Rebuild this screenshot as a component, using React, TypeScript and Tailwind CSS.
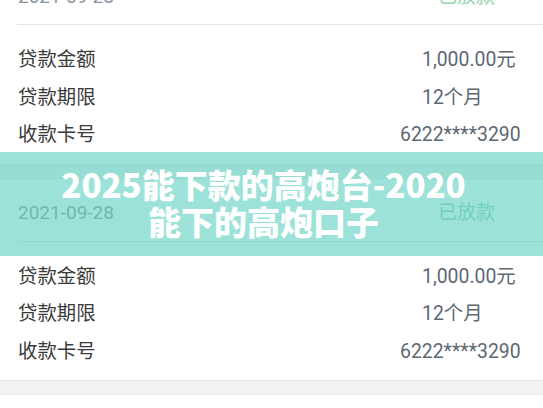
import React from "react";

interface LoanRecord {
  date: string;
  status: string;
  amount: string;
  term: string;
  card: string;
}

const records: LoanRecord[] = [
  { date: "2021-09-28", status: "已放款", amount: "1,000.00元", term: "12个月", card: "6222****3290" },
  { date: "2021-09-28", status: "已放款", amount: "1,000.00元", term: "12个月", card: "6222****3290" },
  { date: "2021-09-28", status: "已放款", amount: "1,000.00元", term: "12个月", card: "6222****3290" },
];

const font = { fontFamily: '"Roboto", "Noto Sans CJK SC", sans-serif' };

const Row = ({ label, value, shift }: { label: string; value: string; shift?: boolean }) => (
  <div className="flex items-center h-[37.5px]">
    <span className="w-[404px] text-[#3a3a3a]">{label}</span>
    <span className={shift ? "-ml-[22px] text-[#5d6873]" : "text-[#5d6873]"}>{value}</span>
  </div>
);

const RecordCard = ({ record }: { record: LoanRecord }) => (
  <div className="bg-white">
    <div className="flex items-center justify-between h-[62px] pl-[18px] pr-[48px] pt-[6px]">
      <span className="text-[#8a949c]">{record.date}</span>
      <span className="text-[#93d3ad]">{record.status}</span>
    </div>
    <div className="ml-[17px] h-px bg-[#e6e6e6]" />
    <div className="pl-[18px] pt-[16px] pb-[10px] text-[19.4px]">
      <Row label="贷款金额" value={record.amount} />
      <Row label="贷款期限" value={record.term} />
      <Row label="收款卡号" value={record.card} shift />
    </div>
  </div>
);

export default function App() {
  return (
    <div className="relative w-[543px] h-[408px] overflow-hidden bg-white text-[19px] leading-none" style={font}>
      <div className="-mt-[38px] flex flex-col">
        {records.map((r, i) => (
          <React.Fragment key={i}>
            <RecordCard record={r} />
            <div className="h-[15px] bg-[#f2f2f2] border-y border-[#e8e8e8]" />
          </React.Fragment>
        ))}
      </div>

      <div className="absolute left-0 right-0 top-[152px] h-[104px] bg-[#5ccfbf]/60 flex items-center justify-center">
        <h1
          className="text-white font-black text-[33px] leading-[37px] text-center -mt-[3px] mr-[16px]"
          style={{ fontFamily: '"Noto Sans CJK SC", "Noto Sans", sans-serif' }}
        >
          2025能下款的高炮台-2020
          <br />
          能下的高炮口子
        </h1>
      </div>
    </div>
  );
}
